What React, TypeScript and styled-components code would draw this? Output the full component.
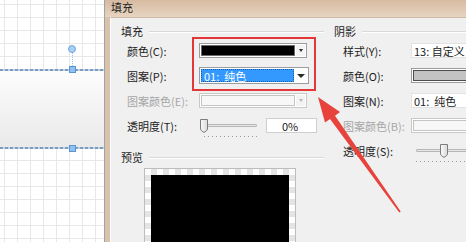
import React from 'react';
import styled, { createGlobalStyle } from 'styled-components';

const GlobalStyle = createGlobalStyle`
  html, body {
    margin: 0;
    padding: 0;
    background: #fff;
  }
  body {
    font-family: 'Noto Sans CJK SC', 'Noto Sans', sans-serif;
  }
`;

const Page = styled.div`
  position: relative;
  display: flex;
  width: 466px;
  height: 242px;
  overflow: hidden;
  font-size: 11px;
  color: #1c1c1c;
`;

/* ---------- drawing canvas on the left ---------- */

const Canvas = styled.div`
  flex: none;
  width: 105px;
  box-sizing: border-box;
  padding-top: 70px;
  background-color: #fff;
  background-image: linear-gradient(to right, #e8e8e8 1px, transparent 1px),
    linear-gradient(to bottom, #e8e8e8 1px, transparent 1px);
  background-size: 13px 13px;
  background-position: 4px 4px;
  border-right: 1px solid #a3a3a3;
`;

const Shape = styled.div`
  position: relative;
  height: 78px;
  background: linear-gradient(#fdfdfd, #e9e9e9);

  &::before,
  &::after {
    content: '';
    position: absolute;
    left: 0;
    right: 0;
    height: 2px;
    background: repeating-linear-gradient(to right, #7b9bbf 0 3px, #c3d3e5 3px 5px);
  }
  &::before {
    top: -1px;
  }
  &::after {
    bottom: -1px;
  }
`;

const Handle = styled.span<{ $edge: 'top' | 'bottom' }>`
  position: absolute;
  left: 69px;
  ${(p) => (p.$edge === 'top' ? 'top: -4px;' : 'bottom: -4px;')}
  width: 7px;
  height: 7px;
  box-sizing: border-box;
  background: #8fc0f1;
  border: 1px solid #5c94cf;
  z-index: 1;
`;

const RotateStem = styled.span`
  position: absolute;
  left: 72px;
  top: -18px;
  height: 14px;
  border-left: 1px dotted #9dbfe4;
`;

const RotateHandle = styled.span`
  position: absolute;
  left: 68px;
  top: -25px;
  width: 8px;
  height: 8px;
  box-sizing: border-box;
  border-radius: 50%;
  background: #a9cef4;
  border: 1px solid #72a6dc;
`;

/* ---------- dialog ---------- */

const Dialog = styled.div`
  flex: 1;
  min-width: 0;
  display: flex;
  flex-direction: column;
  background: #d8c2ac;
`;

const TitleBar = styled.div`
  flex: none;
  height: 17px;
  padding-left: 6px;
  line-height: 15px;
  color: #222;
  background: linear-gradient(#d6bba1, #e7d4c1);
`;

const Client = styled.div`
  flex: 1;
  margin-left: 5px;
  padding-top: 6px;
  display: grid;
  grid-template-columns: 213px 1fr;
  align-content: start;
  background: #f0f0f0;
  border-top: 1px solid #cbb9a6;
  border-left: 1px solid #fbfbfb;
`;

const Column = styled.div<{ $pad: number }>`
  min-width: 0;
  overflow: hidden;
  padding-left: ${(p) => p.$pad}px;
`;

const GroupTitle = styled.div<{ $gap?: number }>`
  display: flex;
  align-items: center;
  gap: 6px;
  height: 14px;
  margin-top: ${(p) => p.$gap ?? 0}px;
  white-space: nowrap;

  &::after {
    content: '';
    flex: 1;
    height: 1px;
    background: #d9d9d9;
    box-shadow: 0 1px 0 #fff;
  }
`;

const Rows = styled.div<{ $pad: number }>`
  padding-left: ${(p) => p.$pad}px;
`;

const FieldRow = styled.div<{ $labelWidth: number }>`
  display: grid;
  grid-template-columns: ${(p) => p.$labelWidth}px auto;
  align-items: center;
  height: 25px;
`;

const Label = styled.span<{ $disabled?: boolean }>`
  white-space: nowrap;
  color: ${(p) => (p.$disabled ? '#a6a6a6' : '#1c1c1c')};
`;

const Inline = styled.div`
  display: flex;
  align-items: center;
  gap: 7px;
`;

/* combo boxes */

const Combo = styled.div<{ $width: number; $height?: number; $disabled?: boolean }>`
  display: flex;
  width: ${(p) => p.$width}px;
  height: ${(p) => p.$height ?? 15}px;
  box-sizing: border-box;
  padding: 1px;
  background: #fff;
  border: 1px solid ${(p) => (p.$disabled ? '#c9c9c9' : '#9c9c9c')};
`;

const Swatch = styled.div<{ $color: string; $edge?: string }>`
  flex: 1;
  background: ${(p) => p.$color};
  border: 1px solid ${(p) => p.$edge ?? '#4a4a4a'};
`;

const Selected = styled.div`
  width: 93px;
  padding-left: 2px;
  box-sizing: border-box;
  display: flex;
  align-items: center;
  background: #3399ff;
  color: #fff;
  border: 1px dotted #1b5fa6;
  white-space: pre;
`;

const DropButton = styled.span<{ $big?: boolean; $disabled?: boolean }>`
  flex: none;
  width: ${(p) => (p.$big ? 13 : 9)}px;
  margin-left: ${(p) => (p.$big ? 'auto' : '1px')};
  display: flex;
  align-items: center;
  justify-content: center;
  background: ${(p) => (p.$big ? '#fff' : '#f3f3f3')};

  &::after {
    content: '';
    border-left: ${(p) => (p.$big ? 4 : 2.5)}px solid transparent;
    border-right: ${(p) => (p.$big ? 4 : 2.5)}px solid transparent;
    border-top: ${(p) => (p.$big ? 4 : 3)}px solid ${(p) => (p.$disabled ? '#b5b5b5' : '#2a2a2a')};
  }
`;

const TextField = styled.div<{ $width: number; $disabled?: boolean }>`
  width: ${(p) => p.$width}px;
  height: 15px;
  box-sizing: border-box;
  padding: 0 2px;
  display: flex;
  align-items: center;
  background: #fff;
  border: 1px solid ${(p) => (p.$disabled ? '#cfcfcf' : '#e2e2e2')};
  white-space: pre;
  overflow: hidden;
`;

const PercentBox = styled.div`
  width: 51px;
  height: 15px;
  box-sizing: border-box;
  padding-left: 15px;
  display: flex;
  align-items: center;
  background: #fff;
  border: 1px solid #cfcfcf;
`;

/* sliders */

const Slider = styled.div<{ $width: number }>`
  position: relative;
  width: ${(p) => p.$width}px;
  height: 25px;
`;

const Track = styled.span`
  position: absolute;
  left: 5px;
  right: 2px;
  top: 11px;
  height: 3px;
  box-sizing: border-box;
  background: #e7e7e7;
  border: 1px solid #b7b7b7;
  border-radius: 1px;
`;

const Ticks = styled.span`
  position: absolute;
  left: 5px;
  right: 2px;
  top: 23px;
  height: 1px;
  background: repeating-linear-gradient(to right, #9b9b9b 0 1px, transparent 1px 4px);
`;

const ThumbWrap = styled.span`
  position: absolute;
  top: 5px;
  display: flex;
`;

/* preview */

const PreviewFrame = styled.div`
  margin: 4px 0 0 23px;
  width: 152px;
  height: 90px;
  box-sizing: border-box;
  padding: 6px;
  border: 1px solid #bdbdbd;
  background-color: #fff;
  background-image: repeating-conic-gradient(#e4e4e4 0 25%, #fff 0 50%);
  background-size: 12px 12px;
`;

const PreviewFill = styled.div`
  height: 100%;
  background: #000;
`;

/* annotation overlay */

const Overlay = styled.svg`
  position: absolute;
  left: 0;
  top: 0;
  pointer-events: none;
`;

function Thumb() {
  return (
    <svg width="10" height="16" viewBox="0 0 10 16">
      <defs>
        <linearGradient id="thumbFill" x1="0" y1="0" x2="1" y2="0">
          <stop offset="0" stopColor="#fbfbfb" />
          <stop offset="1" stopColor="#d9d9d9" />
        </linearGradient>
      </defs>
      <path
        d="M1.5 1.5 H8.5 V11 Q8.5 12.5 5 14.5 Q1.5 12.5 1.5 11 Z"
        fill="url(#thumbFill)"
        stroke="#7d7d7d"
        strokeWidth="1"
      />
    </svg>
  );
}

function TrackBar(props: { width: number; thumbAt: number }) {
  return (
    <Slider $width={props.width}>
      <Track />
      <Ticks />
      <ThumbWrap style={{ left: props.thumbAt }}>
        <Thumb />
      </ThumbWrap>
    </Slider>
  );
}

export default function App() {
  return (
    <Page>
      <GlobalStyle />
      <Canvas>
        <Shape>
          <RotateStem />
          <RotateHandle />
          <Handle $edge="top" />
          <Handle $edge="bottom" />
        </Shape>
      </Canvas>

      <Dialog>
        <TitleBar>填充</TitleBar>
        <Client>
          <Column $pad={10}>
            <GroupTitle>填充</GroupTitle>
            <Rows $pad={6}>
              <FieldRow $labelWidth={72}>
                <Label>颜色(C):</Label>
                <Combo $width={108}>
                  <Swatch $color="#000" $edge="#6a6a6a" />
                  <DropButton />
                </Combo>
              </FieldRow>
              <FieldRow $labelWidth={72}>
                <Label>图案(P):</Label>
                <Combo $width={110} $height={17}>
                  <Selected>{'01:  纯色'}</Selected>
                  <DropButton $big />
                </Combo>
              </FieldRow>
              <FieldRow $labelWidth={72}>
                <Label $disabled>图案颜色(E):</Label>
                <Combo $width={108} $disabled>
                  <Swatch $color="#f7f7f7" $edge="#c4c4c4" />
                  <DropButton $disabled />
                </Combo>
              </FieldRow>
              <FieldRow $labelWidth={72}>
                <Label>透明度(T):</Label>
                <Inline>
                  <TrackBar width={60} thumbAt={0} />
                  <PercentBox>0%</PercentBox>
                </Inline>
              </FieldRow>
            </Rows>
            <GroupTitle $gap={12}>预览</GroupTitle>
            <PreviewFrame>
              <PreviewFill />
            </PreviewFrame>
          </Column>

          <Column $pad={10}>
            <GroupTitle>阴影</GroupTitle>
            <Rows $pad={9}>
              <FieldRow $labelWidth={68}>
                <Label>样式(Y):</Label>
                <TextField $width={80}>{'13: 自定义'}</TextField>
              </FieldRow>
              <FieldRow $labelWidth={68}>
                <Label>颜色(O):</Label>
                <Combo $width={80}>
                  <Swatch $color="#c3c3c3" $edge="#4d4d4d" />
                </Combo>
              </FieldRow>
              <FieldRow $labelWidth={68}>
                <Label>图案(N):</Label>
                <TextField $width={80}>{'01:  纯色'}</TextField>
              </FieldRow>
              <FieldRow $labelWidth={68}>
                <Label $disabled>图案颜色(B):</Label>
                <Combo $width={80} $disabled>
                  <Swatch $color="#f7f7f7" $edge="#c4c4c4" />
                </Combo>
              </FieldRow>
              <FieldRow $labelWidth={68}>
                <Label>透明度(S):</Label>
                <TrackBar width={80} thumbAt={28} />
              </FieldRow>
            </Rows>
          </Column>
        </Client>
      </Dialog>

      <Overlay width="466" height="242" viewBox="0 0 466 242">
        <rect x="193" y="38" width="122" height="52" fill="none" stroke="#e3383a" strokeWidth="2" />
        <polygon
          points="318,97 340,112 335,115.7 400.7,211.5 399.3,212.5 330,119 325,122.6"
          fill="#e8423c"
        />
      </Overlay>
    </Page>
  );
}
